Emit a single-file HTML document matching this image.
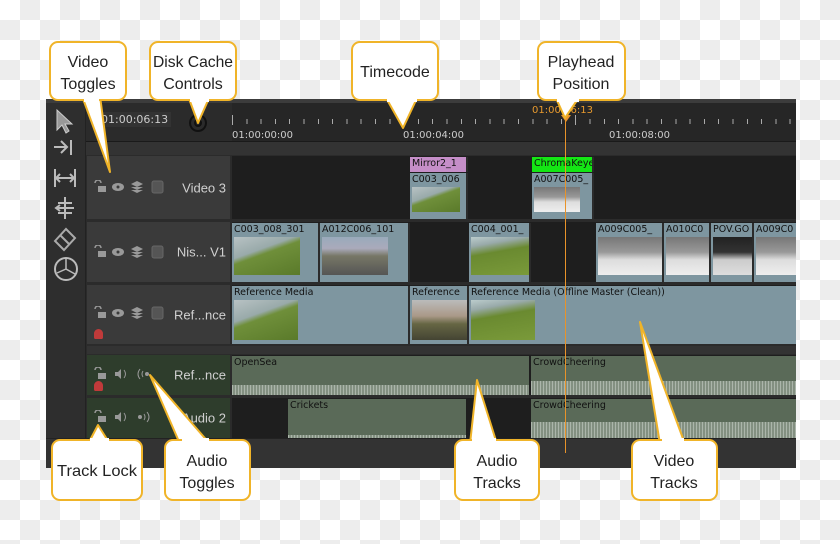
<!DOCTYPE html>
<html><head><meta charset="utf-8"><style>
*{margin:0;padding:0;box-sizing:border-box}
body{width:840px;height:544px;overflow:hidden;position:relative;font-family:"Liberation Sans",sans-serif;
background-color:#fff;background-image:linear-gradient(45deg,#ededed 25%,transparent 25%,transparent 75%,#ededed 75%),linear-gradient(45deg,#ededed 25%,transparent 25%,transparent 75%,#ededed 75%);background-size:40px 40px;background-position:0 0,20px 20px}
.a{position:absolute}
.app{left:46px;top:99px;width:750px;height:368px;background:#2b2b2b;border-top:4px solid #3c3c3c}
.hd{background:#3a3a3a;color:#ccc;font-size:13px}
.lbl{position:absolute;right:4px;top:50%;transform:translateY(-50%);font-size:13px;color:#d0d0d0}
.ic{position:absolute;left:5px}
.clip{position:absolute;background:#7e96a0;border-right:2px solid #2b2b2b;overflow:hidden;font-family:"DejaVu Sans",sans-serif;font-size:9.5px;color:#111;white-space:nowrap;padding:1px 2px}
.th{position:absolute;left:2px;top:14px;width:66px;height:38px;background:linear-gradient(160deg,#b8c2c4 0%,#9aa 35%,#6f8f3a 45%,#5a7a2a 100%)}
.sn{background:linear-gradient(180deg,#777 0%,#999 40%,#ddd 60%,#eee 100%)}
.au{position:absolute;background:#5a6a58;font-family:"DejaVu Sans",sans-serif;font-size:9.5px;color:#111;padding:1px 2px;overflow:hidden}
.wave{position:absolute;left:0;right:0;bottom:0;height:10px;background:repeating-linear-gradient(90deg,#bfc8bf 0 1px,#8d9a8b 1px 3px);opacity:.8}
.tc{font-family:"DejaVu Sans",sans-serif;font-size:10px;color:#ccc}
</style></head><body>
<div class="a app">
 <div class="a" style="left:0;top:0;width:40px;height:364px;background:#2e2e2e;border-right:1px solid #222"></div>
 <svg class="a" style="left:0;top:0" width="40" height="180" fill="none" stroke="#bbb" stroke-width="2">
  <path d="M11,7 L11,27 L16,22 L20,30 L23,28 L19,21 L26,21 Z" fill="#999" stroke="#ccc" stroke-width="1"/>
  <path d="M8,44 H20 M15,38 L21,44 L15,50 M25,37 V52"/>
  <path d="M9,66 V84 M29,66 V84 M11,75 H27 M14,71 L10,75 L14,79 M24,71 L28,75 L24,79"/>
  <path d="M19,94 V116 M12,100 H26 M12,110 H26 M10,105 H28 M14,102 L10,105 L14,108"/>
  <path d="M9,138 L20,126 L29,135 L18,147 Z M14,132 L24,142" stroke="#aaa"/>
  <circle cx="20" cy="166" r="11"/>
  <path d="M20,155 L20,166 L29,171 M11,170 L20,166" stroke-width="1.5"/>
 </svg>
 <div class="a tc" style="left:52px;top:9px;font-size:11px;background:#333;padding:1px 3px">01:00:06:13</div>
 <div class="a" style="left:143px;top:11px;width:18px;height:18px;border:2px solid #111;border-radius:50%;box-shadow:inset 0 0 0 3px #2b2b2b,inset 0 0 0 5px #111"></div>
 <div class="a" style="left:186px;top:0;width:564px;height:38px;background:#262626"></div>
 <div class="a" style="left:186px;top:16px;width:564px;height:5px;background:repeating-linear-gradient(90deg,#aaa 0 1px,transparent 1px 14.3px)"></div>
 <div class="a" style="left:186px;top:12px;width:1px;height:10px;background:#aaa"></div>
 <div class="a" style="left:357px;top:12px;width:1px;height:10px;background:#aaa"></div>
 <div class="a" style="left:529px;top:12px;width:1px;height:10px;background:#aaa"></div>
 <div class="a tc" style="left:186px;top:27px">01:00:00:00</div>
 <div class="a tc" style="left:357px;top:27px">01:00:04:00</div>
 <div class="a tc" style="left:563px;top:27px">01:00:08:00</div>
 <div class="a tc" style="left:486px;top:2px;color:#e89a2e">01:00:06:13</div>
 <div class="a" style="left:40px;top:38px;width:710px;height:14px;background:#333;border-top:1px solid #1a1a1a"></div>
 <!-- track headers -->
 <div class="a hd" style="left:41px;top:53px;width:143px;height:63px"><svg class="ic" style="top:24px" width="80" height="14"><g fill="#999"><path d="M3,3 a3,3 0 0 1 6,0" fill="none" stroke="#999" stroke-width="1.5"/><rect x="6" y="6" width="8" height="6"/><ellipse cx="26" cy="7" rx="6" ry="4"/><circle cx="26" cy="7" r="1.5" fill="#3a3a3a"/><path d="M39,4 l6,-3 l6,3 l-6,3z M39,7 l6,3 l6,-3 M39,10 l6,3 l6,-3"/></g><rect x="60" y="1" width="11" height="12" rx="2" fill="#555" stroke="#666"/></svg><div class="lbl">Video 3</div></div>
 <div class="a hd" style="left:41px;top:119px;width:143px;height:60px"><svg class="ic" style="top:23px" width="80" height="14"><g fill="#999"><path d="M3,3 a3,3 0 0 1 6,0" fill="none" stroke="#999" stroke-width="1.5"/><rect x="6" y="6" width="8" height="6"/><ellipse cx="26" cy="7" rx="6" ry="4"/><circle cx="26" cy="7" r="1.5" fill="#3a3a3a"/><path d="M39,4 l6,-3 l6,3 l-6,3z M39,7 l6,3 l6,-3 M39,10 l6,3 l6,-3"/></g><rect x="60" y="1" width="11" height="12" rx="2" fill="#555" stroke="#666"/></svg><div class="lbl">Nis... V1</div></div>
 <div class="a hd" style="left:41px;top:182px;width:143px;height:59px"><svg class="ic" style="top:21px" width="80" height="14"><g fill="#999"><path d="M3,3 a3,3 0 0 1 6,0" fill="none" stroke="#999" stroke-width="1.5"/><rect x="6" y="6" width="8" height="6"/><ellipse cx="26" cy="7" rx="6" ry="4"/><circle cx="26" cy="7" r="1.5" fill="#3a3a3a"/><path d="M39,4 l6,-3 l6,3 l-6,3z M39,7 l6,3 l6,-3 M39,10 l6,3 l6,-3"/></g><rect x="60" y="1" width="11" height="12" rx="2" fill="#555" stroke="#666"/></svg><div class="lbl">Ref...nce</div><div class="a" style="left:7px;top:44px;width:9px;height:10px;background:#c03a3a;border-radius:5px 5px 2px 2px"></div></div>
 <div class="a" style="left:41px;top:243px;width:709px;height:8px;background:#333"></div>
 <div class="a hd" style="left:41px;top:252px;width:143px;height:40px;background:#2e3d2c"><svg class="ic" style="top:12px" width="80" height="14"><g fill="#999"><path d="M3,3 a3,3 0 0 1 6,0" fill="none" stroke="#999" stroke-width="1.5"/><rect x="6" y="6" width="8" height="6"/><path d="M23,5 h3 l3,-3 v10 l-3,-3 h-3z"/><path d="M32,3 q3,4 0,8" fill="none" stroke="#999"/><path d="M48,2 q-4,5 0,10 M51,4 q-2,3 0,6" fill="none" stroke="#999"/><circle cx="55" cy="7" r="2"/></g></svg><div class="lbl">Ref...nce</div><div class="a" style="left:7px;top:26px;width:9px;height:10px;background:#c03a3a;border-radius:5px 5px 2px 2px"></div></div>
 <div class="a hd" style="left:41px;top:295px;width:143px;height:40px;background:#2e3d2c"><svg class="ic" style="top:12px" width="80" height="14"><g fill="#999"><path d="M3,3 a3,3 0 0 1 6,0" fill="none" stroke="#999" stroke-width="1.5"/><rect x="6" y="6" width="8" height="6"/><path d="M23,5 h3 l3,-3 v10 l-3,-3 h-3z"/><path d="M32,3 q3,4 0,8" fill="none" stroke="#999"/><circle cx="48" cy="7" r="2"/><path d="M52,4 q2,3 0,6 M55,2 q4,5 0,10" fill="none" stroke="#999"/></g></svg><div class="lbl">Audio 2</div></div>
 <div class="a" style="left:186px;top:53px;width:564px;height:63px;background:#1e1e1e"></div>
 <div class="a" style="left:186px;top:119px;width:564px;height:60px;background:#1e1e1e"></div>
 <div class="a" style="left:186px;top:182px;width:564px;height:59px;background:#1e1e1e"></div>
 <div class="a" style="left:186px;top:252px;width:564px;height:40px;background:#1e1e1e"></div>
 <div class="a" style="left:186px;top:295px;width:564px;height:40px;background:#1e1e1e"></div>
 <div class="a" style="left:0;top:335px;width:750px;height:30px;background:#333;border-top:1px solid #222"></div>
 <div class="clip" style="left:364px;top:54px;width:58px;height:15px;background:#c58ec8">Mirror2_1</div>
 <div class="clip" style="left:364px;top:70px;width:58px;height:46px">C003_006<div class="th" style="width:48px;height:25px"></div></div>
 <div class="clip" style="left:486px;top:54px;width:62px;height:15px;background:#14e614">ChromaKeyer</div>
 <div class="clip" style="left:486px;top:70px;width:62px;height:46px">A007C005_<div class="th sn" style="width:46px;height:25px"></div></div>
 <div class="clip" style="left:186px;top:120px;width:88px;height:59px">C003_008_301<div class="th"></div></div>
 <div class="clip" style="left:274px;top:120px;width:90px;height:59px">A012C006_101<div class="th" style="background:linear-gradient(180deg,#9ab 0,#aab 30%,#776 50%,#555 100%)"></div></div>
 <div class="clip" style="left:423px;top:120px;width:62px;height:59px">C004_001_<div class="th" style="width:60px;background:linear-gradient(170deg,#bcc 0,#9aa 20%,#6a8a30 40%,#7a9a3a 100%)"></div></div>
 <div class="clip" style="left:550px;top:120px;width:68px;height:59px">A009C005_<div class="th sn"></div></div>
 <div class="clip" style="left:618px;top:120px;width:47px;height:59px">A010C0<div class="th sn" style="width:44px"></div></div>
 <div class="clip" style="left:665px;top:120px;width:43px;height:59px">POV.GO<div class="th sn" style="width:41px;background:linear-gradient(180deg,#222 0,#333 40%,#ccc 60%,#ddd 100%)"></div></div>
 <div class="clip" style="left:708px;top:120px;width:42px;height:59px;border:0">A009C0<div class="th sn"></div></div>
 <div class="clip" style="left:186px;top:183px;width:178px;height:58px">Reference Media<div class="th" style="width:64px;height:40px"></div></div>
 <div class="clip" style="left:364px;top:183px;width:59px;height:58px">Reference<div class="th" style="width:57px;height:40px;background:linear-gradient(180deg,#bbb 0,#a98 40%,#664 60%,#443 100%)"></div></div>
 <div class="clip" style="left:423px;top:183px;width:327px;height:58px;border:0">Reference Media (Offline Master (Clean))<div class="th" style="width:64px;height:40px;background:linear-gradient(170deg,#bcc 0,#9aa 20%,#6a8a30 40%,#7a9a3a 100%)"></div></div>
 <div class="au" style="left:186px;top:253px;width:297px;height:39px">OpenSea<div class="wave"></div></div>
 <div class="au" style="left:485px;top:253px;width:265px;height:39px">CrowdCheering<div class="wave" style="height:14px"></div></div>
 <div class="au" style="left:242px;top:296px;width:178px;height:39px">Crickets<div class="wave" style="height:3px"></div></div>
 <div class="au" style="left:485px;top:296px;width:265px;height:39px">CrowdCheering<div class="wave" style="height:16px"></div></div>
 <div class="a" style="left:519px;top:10px;width:1px;height:340px;background:#e8932a"></div>
 <div class="a" style="left:515px;top:12px;width:0;height:0;border-left:5px solid transparent;border-right:5px solid transparent;border-top:7px solid #e8932a"></div>
</div>
<svg class="a" style="left:0;top:0" width="840" height="544">
<g fill="#fff" stroke="#f0b429" stroke-width="2" stroke-linejoin="round">
 <polygon points="82,96 110,172 100,96"/>
 <polygon points="188,96 198,123 210,96"/>
 <polygon points="385,96 403,128 418,96"/>
 <polygon points="555,96 565,118 580,96"/>
 <polygon points="88,444 98,425 110,444"/>
 <polygon points="180,444 150,375 210,444"/>
 <polygon points="470,444 477,380 497,444"/>
 <polygon points="660,444 640,322 685,444"/>
 <rect x="50" y="42" width="76" height="58" rx="8"/>
 <rect x="150" y="42" width="86" height="58" rx="8"/>
 <rect x="352" y="42" width="86" height="58" rx="8"/>
 <rect x="538" y="42" width="87" height="58" rx="8"/>
 <rect x="52" y="440" width="90" height="60" rx="8"/>
 <rect x="165" y="440" width="85" height="60" rx="8"/>
 <rect x="455" y="440" width="84" height="60" rx="8"/>
 <rect x="632" y="440" width="85" height="60" rx="8"/>
</g>
<g fill="#fff"><rect x="84" y="94" width="15" height="8"/><rect x="190" y="94" width="19" height="8"/><rect x="387" y="94" width="30" height="8"/><rect x="557" y="94" width="22" height="8"/><rect x="90" y="438" width="19" height="8"/><rect x="182" y="438" width="27" height="8"/><rect x="472" y="438" width="24" height="8"/><rect x="662" y="438" width="22" height="8"/></g>
<g font-family="Liberation Sans, sans-serif" font-size="16" fill="#222" text-anchor="middle">
 <text x="88" y="67">Video</text><text x="88" y="89">Toggles</text>
 <text x="193" y="67" textLength="80" lengthAdjust="spacingAndGlyphs">Disk Cache</text><text x="193" y="89">Controls</text>
 <text x="395" y="77">Timecode</text>
 <text x="581" y="67">Playhead</text><text x="581" y="89">Position</text>
 <text x="97" y="476" textLength="80" lengthAdjust="spacingAndGlyphs">Track Lock</text>
 <text x="207" y="466">Audio</text><text x="207" y="488">Toggles</text>
 <text x="497" y="466">Audio</text><text x="497" y="488">Tracks</text>
 <text x="674" y="466">Video</text><text x="674" y="488">Tracks</text>
</g>
</svg>
</body></html>
